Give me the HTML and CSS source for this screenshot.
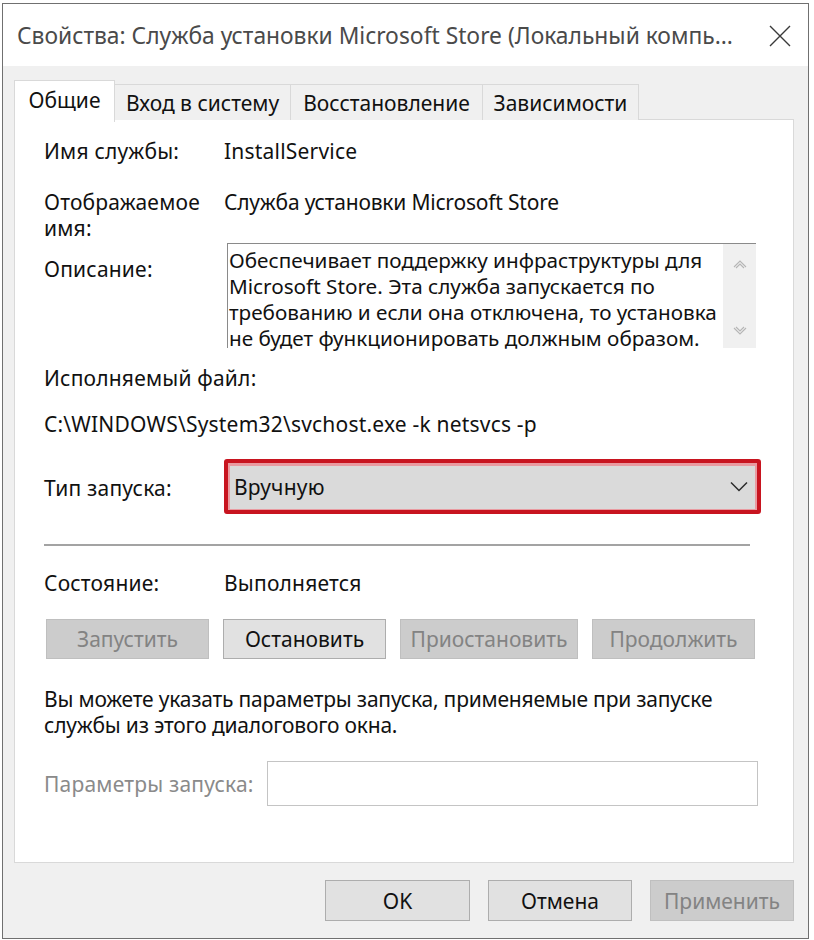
FILE: index.html
```html
<!DOCTYPE html>
<html lang="ru">
<head>
<meta charset="utf-8">
<title>Свойства: Служба установки Microsoft Store</title>
<link rel="stylesheet" href="styles.css">
</head>
<body>
<div class="window">
  <div class="titlebar">
    <div class="title">Свойства: Служба установки Microsoft Store (Локальный компь...</div>
    <svg class="close" width="22" height="22" viewBox="0 0 22 22"><path d="M1 1L21 21M21 1L1 21" stroke="#3a3a3a" stroke-width="1.4" fill="none"/></svg>
  </div>
  <div class="client">
    <div class="tabs">
      <div class="tab tab-active tab-general">Общие</div>
      <div class="tab tab-logon">Вход в систему</div>
      <div class="tab tab-recovery">Восстановление</div>
      <div class="tab tab-deps">Зависимости</div>
    </div>
    <div class="panel">
      <div class="row row-name">
        <div class="label">Имя службы:</div>
        <div class="value">InstallService</div>
      </div>
      <div class="row row-display">
        <div class="label label-two">Отображаемое<br>имя:</div>
        <div class="value tight">Служба установки Microsoft Store</div>
      </div>
      <div class="row row-desc">
        <div class="label label-desc">Описание:</div>
        <div class="desc">
          <div class="desc-text">Обеспечивает поддержку инфраструктуры для Microsoft Store. Эта служба запускается по требованию и если она отключена, то установка не будет функционировать должным образом.</div>
          <div class="scrollbar">
            <svg width="14" height="10" viewBox="0 0 14 10"><path d="M1 8L7 2L13 8M3 9L7 5L11 9" stroke="#b5b5b5" stroke-width="1.1" fill="none"/></svg>
            <svg width="14" height="10" viewBox="0 0 14 10"><path d="M1 2L7 8L13 2M3 1L7 5L11 1" stroke="#b5b5b5" stroke-width="1.1" fill="none"/></svg>
          </div>
        </div>
      </div>
      <div class="text row-exe">Исполняемый файл:</div>
      <div class="text row-path">C:\WINDOWS\System32\svchost.exe -k netsvcs -p</div>
      <div class="row row-start">
        <div class="label">Тип запуска:</div>
        <div class="combo">
          <span>Вручную</span>
          <svg width="18" height="11" viewBox="0 0 18 11"><path d="M1 1.5L9 9.5L17 1.5" stroke="#2b2b2b" stroke-width="1.5" fill="none"/></svg>
        </div>
      </div>
      <div class="separator"></div>
      <div class="row row-state">
        <div class="label">Состояние:</div>
        <div class="value">Выполняется</div>
      </div>
      <div class="svc-buttons">
        <div class="btn btn-disabled btn-start">Запустить</div>
        <div class="btn btn-stop">Остановить</div>
        <div class="btn btn-disabled btn-pause">Приостановить</div>
        <div class="btn btn-disabled btn-resume">Продолжить</div>
      </div>
      <div class="text hint tight">Вы можете указать параметры запуска, применяемые при запуске<br>службы из этого диалогового окна.</div>
      <div class="row row-params">
        <div class="label label-disabled">Параметры запуска:</div>
        <div class="input"></div>
      </div>
    </div>
    <div class="footer">
      <div class="btn btn-ok">OK</div>
      <div class="btn btn-cancel">Отмена</div>
      <div class="btn btn-disabled btn-apply">Применить</div>
    </div>
  </div>
</div>
</body>
</html>
```

FILE: styles.css
```css
* { box-sizing: border-box; }
html, body { margin: 0; padding: 0; background: #ffffff; }
body {
  font-family: "Noto Sans", "Open Sans", sans-serif;
  font-size: 21px;
  letter-spacing: 0.2px;
  color: #111;
  width: 814px;
  height: 940px;
  overflow: hidden;
}
.tight { letter-spacing: -0.2px; }
.window {
  margin: 3px 0 0 2px;
  width: 807px;
  height: 936px;
  border: 1px solid #707070;
  display: flex;
  flex-direction: column;
  background: #f0f0f0;
}
.titlebar {
  height: 62px;
  flex: 0 0 62px;
  background: #ffffff;
  display: flex;
  align-items: center;
  justify-content: space-between;
  padding: 0 17px 0 14px;
}
.title {
  font-size: 22.8px;
  color: #4a4a4a;
  white-space: nowrap;
  letter-spacing: 0;
}
.close { margin-top: 2px; }
.client {
  flex: 1;
  padding: 14px 14px 0 11px;
  display: flex;
  flex-direction: column;
}
.tabs {
  display: flex;
  align-items: flex-end;
  height: 40px;
  position: relative;
  z-index: 1;
  margin-bottom: -1px;
}
.tab {
  height: 36px;
  background: #f0f0f0;
  border: 1px solid #d9d9d9;
  border-bottom: none;
  margin-left: -1px;
  display: flex;
  align-items: center;
  justify-content: center;
  color: #111;
  white-space: nowrap;
  letter-spacing: 0;
}
.tab-active {
  height: 42px;
  margin-left: 0;
  margin-bottom: -2px;
  background: #ffffff;
  border-color: #d9d9d9;
  padding-bottom: 4px;
}
.tab-general { width: 101px; }
.tab-logon { width: 177px; }
.tab-recovery { width: 193px; }
.tab-deps { width: 157px; }
.panel {
  height: 744px;
  background: #ffffff;
  border: 1px solid #d9d9d9;
  padding: 0 0 0 29px;
  display: flex;
  flex-direction: column;
}
.row { display: flex; align-items: flex-start; }
.label { width: 180px; flex: 0 0 180px; line-height: 26px; }
.value { line-height: 26px; }
.text { line-height: 26px; }
.row-name { margin-top: 18px; }
.row-display { margin-top: 25px; }
.label-two { line-height: 26px; }
.row-desc { margin-top: 2px; }
.label-desc { padding-top: 13px; }
.desc {
  margin-left: 3px;
  width: 529px;
  height: 105px;
  border-top: 1px solid #8a8a8a;
  border-left: 1px solid #8a8a8a;
  display: flex;
  background: #ffffff;
}
.desc-text {
  flex: 1;
  padding: 3px 0 0 1px;
  line-height: 26px;
  font-size: 20.7px;
  letter-spacing: 0;
}
.scrollbar {
  width: 33px;
  background: #f0f0f0;
  display: flex;
  flex-direction: column;
  justify-content: space-between;
  align-items: center;
  padding: 15px 0 12px;
}
.row-exe { margin-top: 17px; }
.row-path { margin-top: 20px; }
.row-start { margin-top: 22px; align-items: center; }
.row-start .label { padding-top: 2px; }
.combo {
  width: 537px;
  height: 55px;
  border: 4px solid #c8141f;
  border-radius: 3px;
  background: #dadada;
  box-shadow: inset 0 1px 0 2px #e99aa0;
  display: flex;
  align-items: center;
  justify-content: space-between;
  padding: 0 9px 0 6px;
}
.separator {
  margin-top: 30px;
  width: 706px;
  height: 2px;
  background: #a3a3a3;
}
.row-state { margin-top: 24px; }
.svc-buttons {
  margin-top: 23px;
  display: flex;
  gap: 14px;
  margin-left: 2px;
}
.btn {
  height: 40px;
  display: flex;
  align-items: center;
  justify-content: center;
  background: #e1e1e1;
  border: 1px solid #adadad;
  color: #111;
  white-space: nowrap;
  letter-spacing: 0;
}
.btn-disabled {
  background: #cccccc;
  border-color: #bfbfbf;
  color: #838383;
}
.btn-start { width: 163px; }
.btn-stop { width: 163px; }
.btn-pause { width: 178px; }
.btn-resume { width: 163px; }
.hint { margin-top: 27px; }
.row-params { margin-top: 23px; align-items: center; }
.label-disabled { width: 223px; flex: 0 0 223px; color: #8a8a8a; }
.input {
  width: 491px;
  height: 45px;
  border: 1px solid #c4c4c4;
  background: #ffffff;
}
.footer {
  display: flex;
  justify-content: flex-end;
  gap: 18px;
  margin-top: 17px;
}
.footer .btn { height: 41px; }
.btn-ok { width: 145px; }
.btn-cancel { width: 144px; }
.btn-apply { width: 144px; }
```
